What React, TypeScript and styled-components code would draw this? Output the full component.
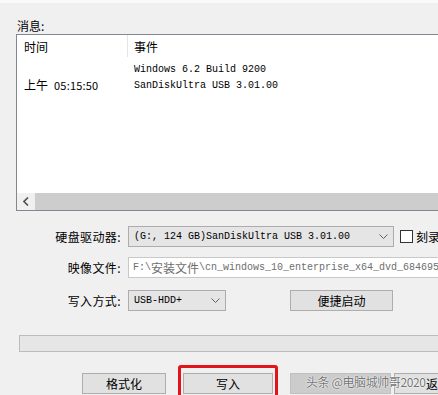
import React from 'react';
import styled, { createGlobalStyle } from 'styled-components';

const GlobalStyle = createGlobalStyle`
  html, body {
    margin: 0;
    padding: 0;
    background: #f0f0f0;
  }
  body {
    font-family: "Noto Sans CJK SC", "Microsoft YaHei", sans-serif;
    font-size: 12px;
    color: #000;
  }
`;

const mono = `"Liberation Mono", "Noto Sans CJK SC", monospace`;

const Window = styled.div`
  position: relative;
  width: 438px;
  height: 395px;
  overflow: hidden;
  background: #f0f0f0;
  display: flex;
  flex-direction: column;
`;

const Caption = styled.div`
  height: 35px;
  box-sizing: border-box;
  padding: 15px 0 0 17px;
  line-height: 16px;
  border-top: 3px solid #fafafa;
`;

const ListBox = styled.div`
  margin-left: 16px;
  width: 440px;
  height: 177px;
  box-sizing: border-box;
  border: 1px solid #828790;
  background: #fff;
  display: flex;
  flex-direction: column;
  flex-shrink: 0;
`;

const ListRow = styled.div<{ $height: number }>`
  display: grid;
  grid-template-columns: 111px 1fr;
  height: ${(p) => p.$height}px;
  align-items: center;
`;

const HeaderCell = styled.div<{ $divider?: boolean }>`
  height: 100%;
  display: flex;
  align-items: center;
  padding-left: ${(p) => (p.$divider ? 7 : 6)}px;
  border-right: ${(p) => (p.$divider ? '1px solid #e5e5e5' : 'none')};
  font-size: 12px;
`;

const Cell = styled.div<{ $mono?: boolean }>`
  padding-left: ${(p) => (p.$mono ? 6 : 7)}px;
  font-family: ${(p) => (p.$mono ? mono : 'inherit')};
  font-size: ${(p) => (p.$mono ? '10px' : '12px')};
  white-space: nowrap;
  line-height: 15px;
`;

const Digits = styled.span`
  font-size: 11px;
  margin-left: 6px;
  letter-spacing: 0.2px;
`;

const ListFill = styled.div`
  flex: 1;
`;

const HScroll = styled.div`
  height: 17px;
  display: flex;
  background: #f0f0f0;
`;

const ScrollArrow = styled.div`
  width: 17px;
  display: flex;
  align-items: center;
  justify-content: center;
`;

const ScrollThumb = styled.div`
  flex: 1;
  margin: 0 0 0 1px;
  background: #cdcdcd;
`;

const Form = styled.div`
  display: flex;
  flex-direction: column;
  margin-top: 15px;
`;

const FormRow = styled.div<{ $gap: number }>`
  display: flex;
  align-items: center;
  margin-top: ${(p) => p.$gap}px;
  height: 21px;
`;

const Label = styled.div`
  width: 128px;
  flex-shrink: 0;
  text-align: right;
  padding-right: 7px;
  box-sizing: border-box;
  font-size: 12px;
  letter-spacing: 0.4px;
  white-space: nowrap;
`;

const Combo = styled.div<{ $width: number }>`
  width: ${(p) => p.$width}px;
  height: 21px;
  box-sizing: border-box;
  flex-shrink: 0;
  border: 1px solid #acacac;
  background: #e5e5e5;
  display: flex;
  align-items: center;
  padding-left: 5px;
  font-family: ${mono};
  font-size: 10px;
  white-space: nowrap;
`;

const ComboText = styled.span`
  flex: 1;
`;

const ComboArrow = styled.svg`
  width: 9px;
  height: 6px;
  margin-right: 5px;
`;

const CheckWrap = styled.div`
  display: flex;
  align-items: center;
  margin-left: 6px;
  white-space: nowrap;
`;

const CheckBox = styled.div`
  width: 13px;
  height: 13px;
  box-sizing: border-box;
  border: 1px solid #333;
  background: #fff;
  margin-right: 3px;
`;

const TextInput = styled.div`
  width: 320px;
  height: 21px;
  flex-shrink: 0;
  box-sizing: border-box;
  border: 1px solid #c8c8c8;
  background: #fff;
  color: #6d6d6d;
  display: flex;
  align-items: center;
  padding-left: 4px;
  font-family: ${mono};
  font-size: 10px;
  white-space: nowrap;
  overflow: hidden;
`;

const CjkInMono = styled.span`
  font-family: "Noto Sans CJK SC", sans-serif;
  font-size: 12px;
`;

const Button = styled.div<{ $width: number; $disabled?: boolean }>`
  width: ${(p) => p.$width}px;
  height: 21px;
  box-sizing: border-box;
  flex-shrink: 0;
  border: 1px solid ${(p) => (p.$disabled ? '#bfbfbf' : '#adadad')};
  background: ${(p) => (p.$disabled ? '#cccccc' : '#e1e1e1')};
  color: ${(p) => (p.$disabled ? '#838383' : '#000')};
  display: flex;
  align-items: center;
  justify-content: center;
  font-size: 12px;
  white-space: nowrap;
`;

const Spacer = styled.div<{ $width: number }>`
  width: ${(p) => p.$width}px;
  flex-shrink: 0;
`;

const Progress = styled.div`
  margin: 24px 0 0 19px;
  width: 430px;
  height: 17px;
  box-sizing: border-box;
  border: 1px solid #bcbcbc;
  background: #e6e6e6;
  flex-shrink: 0;
`;

const ButtonBar = styled.div`
  display: flex;
  align-items: flex-start;
  margin-top: 21px;
  padding-left: 82px;
`;

const Highlight = styled.div`
  margin: -8px 12px 0 12px;
  border: 3px solid #e3131b;
  border-radius: 3px;
  padding: 5px 2px 8px 2px;
`;

const Watermark = styled.div`
  position: absolute;
  left: 306px;
  top: 373px;
  font-size: 12px;
  letter-spacing: -0.4px;
  color: rgba(70, 70, 70, 0.75);
  text-shadow: 0 0 2px #fff, 0 0 1px #fff;
  white-space: nowrap;
  pointer-events: none;
`;

const Arrow = () => (
  <ComboArrow viewBox="0 0 9 6">
    <path d="M0.5 0.5 L4.5 4.5 L8.5 0.5" fill="none" stroke="#606060" strokeWidth="1" />
  </ComboArrow>
);

export default function App() {
  return (
    <Window>
      <GlobalStyle />
      <Caption>消息:</Caption>
      <ListBox>
        <ListRow $height={22}>
          <HeaderCell $divider>时间</HeaderCell>
          <HeaderCell>事件</HeaderCell>
        </ListRow>
        <ListRow $height={5} />
        <ListRow $height={15}>
          <Cell />
          <Cell $mono>Windows 6.2 Build 9200</Cell>
        </ListRow>
        <ListRow $height={15}>
          <Cell>
            上午<Digits>05:15:50</Digits>
          </Cell>
          <Cell $mono>SanDiskUltra USB 3.01.00</Cell>
        </ListRow>
        <ListFill />
        <HScroll>
          <ScrollArrow>
            <svg width="6" height="9" viewBox="0 0 6 9">
              <path d="M5 0.5 L1 4.5 L5 8.5" fill="none" stroke="#505050" strokeWidth="1.6" />
            </svg>
          </ScrollArrow>
          <ScrollThumb />
        </HScroll>
      </ListBox>
      <Form>
        <FormRow $gap={0}>
          <Label>硬盘驱动器:</Label>
          <Combo $width={266}>
            <ComboText>(G:, 124 GB)SanDiskUltra USB 3.01.00</ComboText>
            <Arrow />
          </Combo>
          <CheckWrap>
            <CheckBox />
            刻录
          </CheckWrap>
        </FormRow>
        <FormRow $gap={10}>
          <Label>映像文件:</Label>
          <TextInput>
            F:\<CjkInMono>安装文件</CjkInMono>\cn_windows_10_enterprise_x64_dvd_684695
          </TextInput>
        </FormRow>
        <FormRow $gap={12}>
          <Label>写入方式:</Label>
          <Combo $width={98}>
            <ComboText>USB-HDD+</ComboText>
            <Arrow />
          </Combo>
          <Spacer $width={64} />
          <Button $width={103}>便捷启动</Button>
        </FormRow>
      </Form>
      <Progress />
      <ButtonBar>
        <Button $width={84}>格式化</Button>
        <Highlight>
          <Button $width={90}>写入</Button>
        </Highlight>
        <Button $width={101} $disabled />
        <Spacer $width={3} />
        <Button $width={88}>返回</Button>
      </ButtonBar>
      <Watermark>头条 @电脑城帅哥2020</Watermark>
    </Window>
  );
}
